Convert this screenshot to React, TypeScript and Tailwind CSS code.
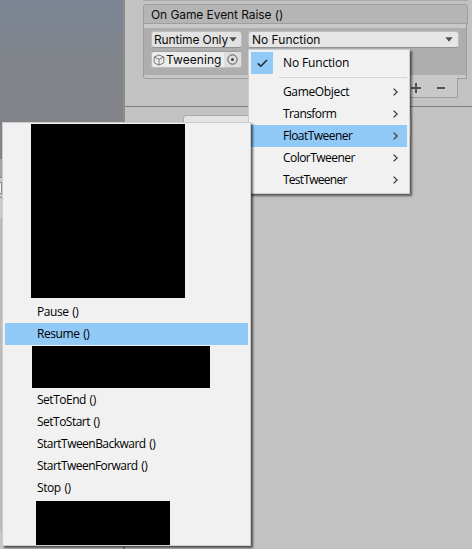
import React from "react";

const targets = [
  { name: "GameObject", spacing: "tracking-[-0.35px]" },
  { name: "Transform", spacing: "tracking-[-0.58px]" },
  { name: "FloatTweener", spacing: "tracking-[-0.54px]" },
  { name: "ColorTweener", spacing: "tracking-[-0.54px]" },
  { name: "TestTweener", spacing: "tracking-[-0.74px]" },
];

function Caret({ className = "" }: { className?: string }) {
  return (
    <svg className={`h-[5px] w-[8px] shrink-0 ${className}`} viewBox="0 0 8 5">
      <path d="M0.3 0.3H7.7L4 4.7Z" fill="#505050" />
    </svg>
  );
}

function Label({ children, className = "" }: { children: React.ReactNode; className?: string }) {
  return (
    <span className={`whitespace-pre font-['Open_Sans',sans-serif] text-[12px] leading-[22px] text-black ${className}`}>
      {children}
    </span>
  );
}

function MethodRow({ text, spacing, active = false }: { text: string; spacing: string; active?: boolean }) {
  return (
    <div className={`ml-[2px] mr-[2px] h-[22px] shrink-0 pl-[32px] ${active ? "bg-[#91c9f7]" : ""}`}>
      <Label className={`block [word-spacing:1px] ${spacing}`}>{text}</Label>
    </div>
  );
}

function Scene() {
  return (
    <div className="flex w-[125px] shrink-0 flex-col">
      <div className="h-[159px] border-r-2 border-[#8c8c8c] bg-linear-to-b from-[#7b8695] via-[#808389] via-40% to-[#828387]" />
      <div className="h-[18px] bg-[#a5a5a5]" />
      <div className="h-[5px] border-t border-[#8a8a8a] bg-[#c8c8c8]" />
      <div className="h-[12px] w-[2px] border-y border-r border-[#8a8a8a] bg-[#f0f0f0]" />
      <div className="mt-[3px] h-px bg-[#909090]" />
      <div className="h-[20px] bg-[#cbcbcb]" />
      <div className="h-[313px] bg-[#bcbcbc]" />
      <div className="flex grow justify-end bg-[#c8c8c8]">
        <div className="w-[2px] bg-[#8c8c8c]" />
      </div>
    </div>
  );
}

function EventInspector() {
  return (
    <div className="flex grow flex-col">
      <div className="flex h-[107px] flex-col border-b border-[#808080] pl-[18px] pr-[4px]">
        <div className="h-px bg-[#a8a8a8]" />
        <div className="mt-[3px] flex h-[20px] items-center rounded-t-[3px] border border-[#9e9e9e] bg-[#b5b5b5] pl-[7px] pt-[2px] text-[12px] tracking-[-0.08px] text-[#0b0b0b]">
          On Game Event Raise ()
        </div>
        <div className="mr-px flex h-[55px] flex-col rounded-bl-[3px] border border-t-0 border-[#9e9e9e] bg-[#c8c8c8] pb-[3px] pt-[4px]">
          <div className="flex grow gap-[6px] bg-[#aeaeae] pl-[7px] pr-[7px] pt-[3px]">
            <div className="flex w-[91px] shrink-0 flex-col gap-[3px]">
              <div className="flex h-[17px] items-center justify-between rounded-[3px] border border-b-[#929292] border-[#bdbdbd] bg-[#e2e2e2] pl-[2px] pr-[4px] text-[12px] text-[#0b0b0b]">
                <span className="whitespace-nowrap tracking-[-0.13px]">Runtime Only</span>
                <Caret />
              </div>
              <div className="flex h-[17px] items-center rounded-[3px] border border-[#bcbcbc] border-t-[#a0a0a0] bg-[#ededed] pl-px text-[12px] text-[#0b0b0b]">
                <svg className="h-[12px] w-[12px] shrink-0" viewBox="0 0 12 12" fill="none" stroke="#7a7a7a" strokeWidth="1" strokeLinejoin="round">
                  <path d="M6 1L10.8 3V8.8L6 11.2L1.2 8.8V3Z M1.2 3L6 5.3L10.8 3 M6 5.3V11" />
                </svg>
                <span className="ml-px w-[58px] tracking-[0.06px]">Tweening</span>
                <span className="flex h-full grow items-center justify-center rounded-r-[2px] bg-[#dedede]">
                  <svg className="h-[11px] w-[11px]" viewBox="0 0 11 11">
                    <circle cx="5.5" cy="5.5" r="4.7" fill="none" stroke="#555" />
                    <circle cx="5.5" cy="5.5" r="1.5" fill="#444" />
                  </svg>
                </span>
              </div>
            </div>
            <div className="flex h-[17px] grow items-center justify-between rounded-[3px] border border-b-[#929292] border-[#bdbdbd] bg-[#e6e6e6] pl-[3px] pr-[5px] text-[12px] text-[#0b0b0b]">
              <span className="whitespace-nowrap">No Function</span>
              <Caret />
            </div>
          </div>
        </div>
        <div className="-mt-px mr-[10px] flex h-[20px] w-[64px] items-center justify-end gap-[16px] self-end rounded-bl-[3px] border border-t-0 border-[#9e9e9e] bg-[#c8c8c8] pr-[12px]">
          <svg className="h-[10px] w-[10px]" viewBox="0 0 10 10" stroke="#505050" strokeWidth="2">
            <path d="M0 5H10M5 0V10" />
          </svg>
          <svg className="h-[10px] w-[8px]" viewBox="0 0 8 10" stroke="#505050" strokeWidth="2">
            <path d="M0 5H8" />
          </svg>
        </div>
      </div>
      <div className="ml-[58px] mt-[8px] h-[24px] w-[229px] rounded-[3px] border border-[#aaaaaa] bg-[#e4e4e4]" />
    </div>
  );
}

function TargetMenu() {
  return (
    <div className="absolute left-[248px] top-[49px] flex h-[145px] w-[162px] flex-col border border-[#cccccc] bg-[#f1f1f1] p-[2px] shadow-[2px_2px_2px_0px_rgba(0,0,0,0.55)]">
      <div className="flex h-[22px] shrink-0">
        <div className="flex w-[22px] items-center justify-center bg-[#91c9f7]">
          <svg className="h-[9px] w-[11px]" viewBox="0 0 11 9" fill="none" stroke="#1c2830" strokeWidth="1.5">
            <path d="M0.8 4.4L3.8 7.3L10 1" />
          </svg>
        </div>
        <Label className="ml-[10px] tracking-[-0.15px]">No Function</Label>
      </div>
      <div className="mb-[3px] ml-[28px] mt-[3px] h-px shrink-0 bg-[#d5d5d5]" />
      {targets.map(({ name, spacing }) => (
        <div
          key={name}
          className={`flex h-[22px] shrink-0 items-center justify-between pl-[32px] pr-[9px] ${name === "FloatTweener" ? "bg-[#91c9f7]" : ""}`}
        >
          <Label className={spacing}>{name}</Label>
          <svg className="h-[8px] w-[5px]" viewBox="0 0 5 8" fill="none" stroke="#303030" strokeWidth="1.2">
            <path d="M0.6 0.6L4.2 4L0.6 7.4" />
          </svg>
        </div>
      ))}
    </div>
  );
}

function MethodMenu() {
  return (
    <div className="absolute left-[2px] top-[122px] flex h-[424px] w-[249px] flex-col border border-[#cccccc] bg-[#f1f1f1] pt-px shadow-[2px_2px_2px_0px_rgba(0,0,0,0.6)]">
      <div className="mb-[3px] ml-[28px] h-[174px] w-[154px] shrink-0 bg-black" />
      <MethodRow text="Pause ()" spacing="tracking-[-0.44px]" />
      <MethodRow text="Resume ()" spacing="tracking-[-0.42px]" active />
      <div className="mb-px ml-[29px] mt-px h-[42px] w-[178px] shrink-0 bg-black" />
      <MethodRow text="SetToEnd ()" spacing="tracking-[-0.48px]" />
      <MethodRow text="SetToStart ()" spacing="tracking-[-0.52px]" />
      <MethodRow text="StartTweenBackward ()" spacing="tracking-[-0.53px]" />
      <MethodRow text="StartTweenForward ()" spacing="tracking-[-0.55px]" />
      <MethodRow text="Stop ()" spacing="tracking-[-0.42px]" />
      <div className="ml-[33px] mt-[2px] h-[44px] w-[134px] shrink-0 bg-black" />
    </div>
  );
}

export default function App() {
  return (
    <div className="relative flex h-[549px] w-[472px] overflow-hidden bg-[#c2c2c2] font-['Inter',sans-serif]">
      <Scene />
      <EventInspector />
      <TargetMenu />
      <MethodMenu />
    </div>
  );
}
